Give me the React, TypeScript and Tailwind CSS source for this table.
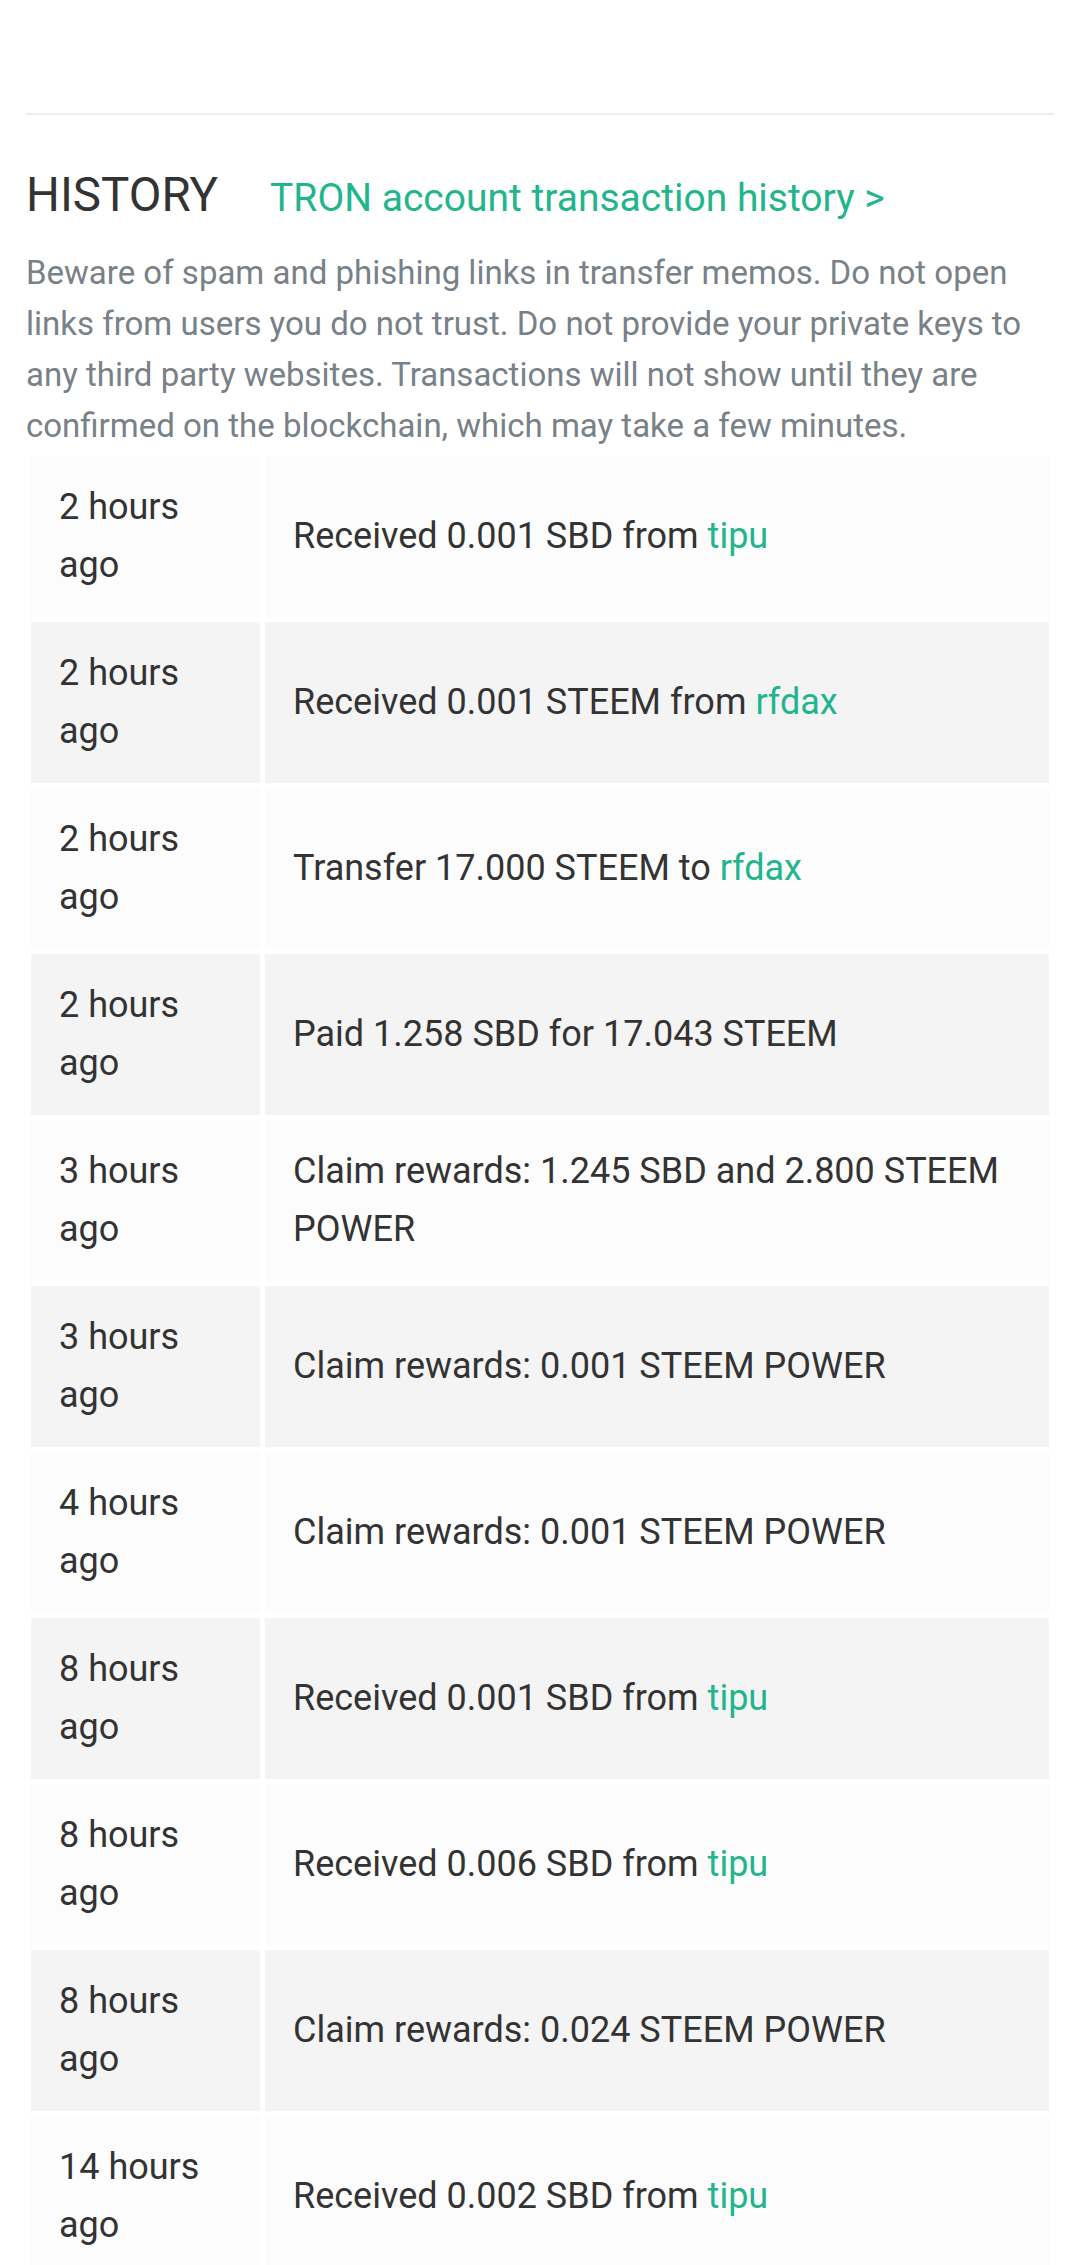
const ROWS: { when: string; text: string; who?: string }[] = [
  { when: '2 hours ago', text: 'Received 0.001 SBD from ', who: 'tipu' },
  { when: '2 hours ago', text: 'Received 0.001 STEEM from ', who: 'rfdax' },
  { when: '2 hours ago', text: 'Transfer 17.000 STEEM to ', who: 'rfdax' },
  { when: '2 hours ago', text: 'Paid 1.258 SBD for 17.043 STEEM' },
  { when: '3 hours ago', text: 'Claim rewards: 1.245 SBD and 2.800 STEEM POWER' },
  { when: '3 hours ago', text: 'Claim rewards: 0.001 STEEM POWER' },
  { when: '4 hours ago', text: 'Claim rewards: 0.001 STEEM POWER' },
  { when: '8 hours ago', text: 'Received 0.001 SBD from ', who: 'tipu' },
  { when: '8 hours ago', text: 'Received 0.006 SBD from ', who: 'tipu' },
  { when: '8 hours ago', text: 'Claim rewards: 0.024 STEEM POWER' },
  { when: '14 hours ago', text: 'Received 0.002 SBD from ', who: 'tipu' },
]

export default function App() {
  return (
    <div className="min-h-[2265px] bg-white px-[26px] font-['Roboto',sans-serif] text-[#333]">
      <div className="pt-[113px]">
        <hr className="border-0 border-t-2 border-[#eeeeee]" />
      </div>

      {/* History header */}
      <div className="mt-[53px] flex items-baseline gap-[52px]">
        <h2 className="text-[47.5px] leading-[54px] font-normal text-[#333]">HISTORY</h2>
        <a className="text-[39px] leading-[54px] text-[#22b58d]">TRON account transaction history &gt;</a>
      </div>

      <p className="mt-[22px] text-[33px] leading-[51px] text-[#788187]">
        Beware of spam and phishing links in transfer memos. Do not open links from users you do not
        trust. Do not provide your private keys to any third party websites. Transactions will not
        show until they are confirmed on the blockchain, which may take a few minutes.
      </p>

      {/* Transfers table */}
      <table className="w-full border-separate border-spacing-[5px] text-[36px]">
        <tbody>
          {ROWS.map((r, i) => (
            <tr key={i} className={i % 2 === 0 ? 'bg-[#fcfcfc]' : 'bg-[#f4f4f4]'}>
              <td className="w-[229px] px-[28px] py-[23px] align-middle leading-[57.5px]">{r.when}</td>
              <td className="px-[28px] py-[23px] align-middle leading-[57.5px]">
                {r.text}
                {r.who && <a className="text-[#22b58d]">{r.who}</a>}
              </td>
            </tr>
          ))}
        </tbody>
      </table>
    </div>
  )
}
